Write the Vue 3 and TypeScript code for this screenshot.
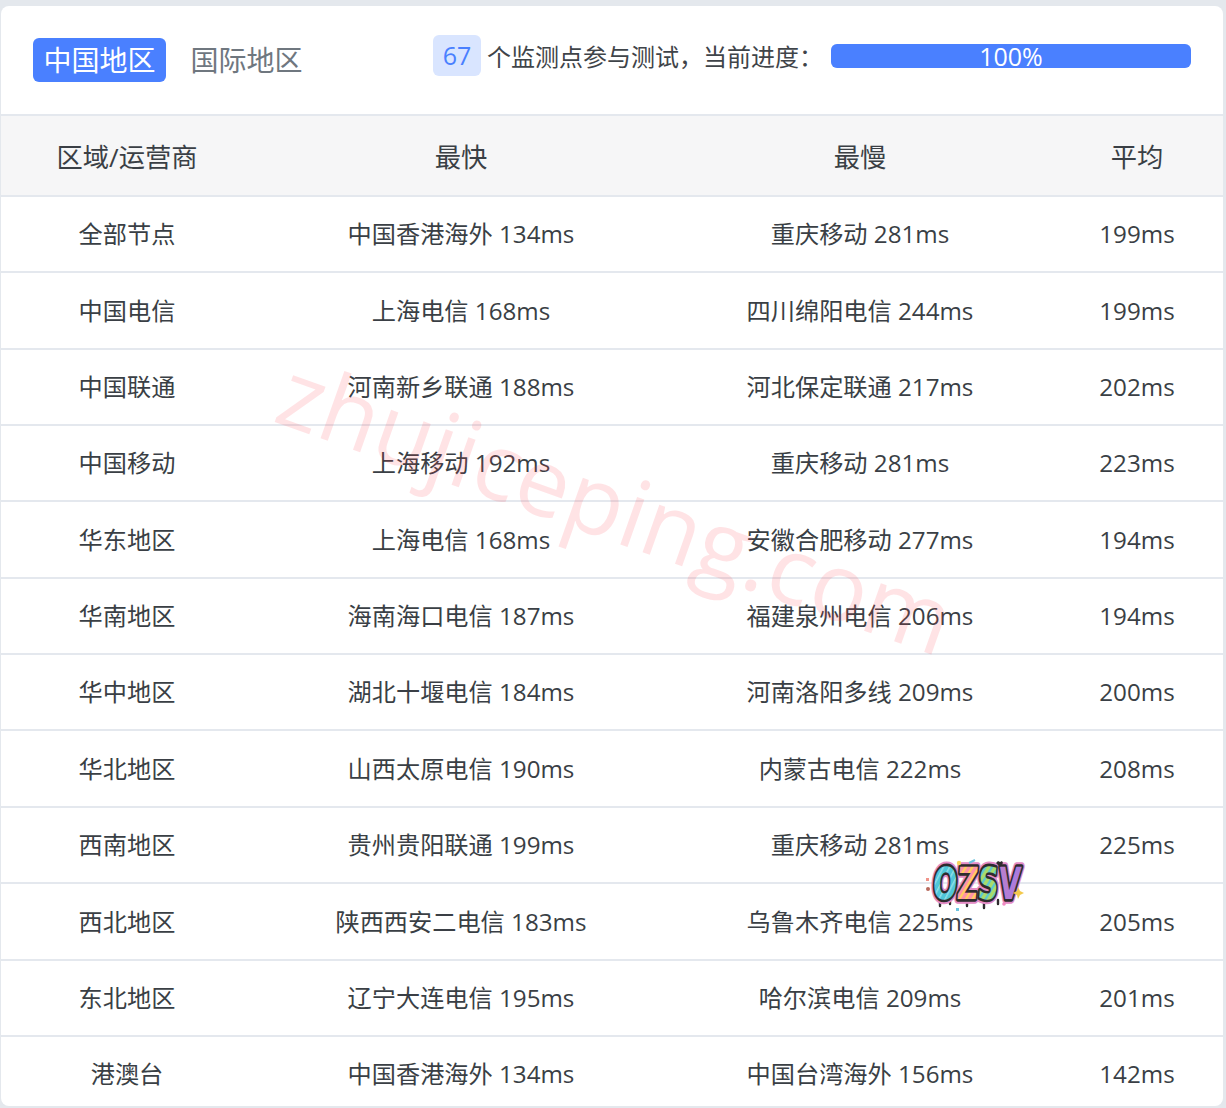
<script setup lang="ts">
interface Row { area: string; fast: string; slow: string; avg: string }
const rows: Row[] = [
  { area: '全部节点', fast: '中国香港海外 134ms', slow: '重庆移动 281ms', avg: '199ms' },
  { area: '中国电信', fast: '上海电信 168ms', slow: '四川绵阳电信 244ms', avg: '199ms' },
  { area: '中国联通', fast: '河南新乡联通 188ms', slow: '河北保定联通 217ms', avg: '202ms' },
  { area: '中国移动', fast: '上海移动 192ms', slow: '重庆移动 281ms', avg: '223ms' },
  { area: '华东地区', fast: '上海电信 168ms', slow: '安徽合肥移动 277ms', avg: '194ms' },
  { area: '华南地区', fast: '海南海口电信 187ms', slow: '福建泉州电信 206ms', avg: '194ms' },
  { area: '华中地区', fast: '湖北十堰电信 184ms', slow: '河南洛阳多线 209ms', avg: '200ms' },
  { area: '华北地区', fast: '山西太原电信 190ms', slow: '内蒙古电信 222ms', avg: '208ms' },
  { area: '西南地区', fast: '贵州贵阳联通 199ms', slow: '重庆移动 281ms', avg: '225ms' },
  { area: '西北地区', fast: '陕西西安二电信 183ms', slow: '乌鲁木齐电信 225ms', avg: '205ms' },
  { area: '东北地区', fast: '辽宁大连电信 195ms', slow: '哈尔滨电信 209ms', avg: '201ms' },
  { area: '港澳台', fast: '中国香港海外 134ms', slow: '中国台湾海外 156ms', avg: '142ms' },
]
</script>

<template>
  <div class="page">
    <div class="card">
      <div class="top">
        <div class="tabs">
          <span class="tab active">中国地区</span>
          <span class="tab">国际地区</span>
        </div>
        <div class="status">
          <span class="count">67</span>
          <span class="label">个监测点参与测试，当前进度：</span>
          <div class="bar"><div class="fill" :style="{ width: '100%' }">100%</div></div>
        </div>
      </div>
      <div class="row head">
        <div>区域/运营商</div>
        <div>最快</div>
        <div>最慢</div>
        <div>平均</div>
      </div>
      <div v-for="(r, i) in rows" :key="i" class="row">
        <div>{{ r.area }}</div>
        <div>{{ r.fast }}</div>
        <div>{{ r.slow }}</div>
        <div>{{ r.avg }}</div>
      </div>
    </div>
    <div class="watermark">zhujiceping.com</div>
    <svg class="logo" width="100" height="56" viewBox="0 0 100 56" aria-label="OZSV">
      <defs>
        <pattern id="pO" width="5" height="5" patternUnits="userSpaceOnUse" patternTransform="rotate(35)">
          <rect width="5" height="5" fill="#4fc6d9" />
          <rect width="1.4" height="5" fill="#8fdde6" />
        </pattern>
        <pattern id="pZ" width="5" height="5" patternUnits="userSpaceOnUse" patternTransform="rotate(40)">
          <rect width="5" height="5" fill="#ff93a6" />
          <rect width="2" height="5" fill="#ffcf5f" />
        </pattern>
        <pattern id="pS" width="5" height="5" patternUnits="userSpaceOnUse" patternTransform="rotate(40)">
          <rect width="5" height="5" fill="#a8dc6c" />
          <rect width="2" height="5" fill="#5cc8cf" />
        </pattern>
        <linearGradient id="gV" x1="0" y1="0" x2="1" y2="0">
          <stop offset="0" stop-color="#ff8f86" />
          <stop offset="1" stop-color="#a67ae2" />
        </linearGradient>
      </defs>
      <g stroke="#2f2b2e" stroke-width="2.4" stroke-linecap="round">
        <path d="M14 42v6M24 43v3M41 44v4M58 44v6M72 42v4" />
      </g>
      <g transform="translate(6 41) skewX(-4) scale(1 1.55)">
        <text class="lt outer" x="0" y="0">OZSV</text>
        <text class="lt inner" x="0" y="0">OZSV</text>
        <text class="lt" x="0" y="0"><tspan fill="url(#pO)">O</tspan><tspan fill="url(#pZ)">Z</tspan><tspan fill="url(#pS)">S</tspan><tspan fill="url(#gV)">V</tspan></text>
      </g>
      <circle cx="33" cy="5" r="2.2" fill="#f6d55c" />
      <path d="M70 5l2 -2 2 1 2 -1 1 2 -3 4z" fill="#2f2b2e" />
      <path d="M43 5l6-3" stroke="#6cc5e0" stroke-width="2" />
      <path d="M92 29l2 4 4 2-4 2-2 4-1-4-4-2 4-2z" fill="#f3c94c" />
      <circle cx="78" cy="46" r="1.8" fill="#f08ac2" />
      <rect x="30" y="50" width="3" height="3" fill="#6cc5e0" />
      <circle cx="2" cy="31" r="2" fill="#b86a5e" />
      <rect x="0" y="20" width="3" height="3" fill="#f0948a" />
    </svg>
  </div>
</template>

<style>
html, body { background: #e4e8ed; }
</style>

<style scoped>
.page {
  position: relative;
  width: 1226px;
  height: 1108px;
  box-sizing: border-box;
  padding: 6px 3px 2px 1px;
  background: #e4e8ed;
  overflow: hidden;
  font-family: "Open Sans", "Noto Sans CJK SC", sans-serif;
  color: #3a3f45;
}
.card {
  height: 1100px;
  background: #fff;
  border-radius: 8px;
  overflow: hidden;
}
.top {
  height: 108px;
  box-sizing: border-box;
  display: flex;
  align-items: center;
  justify-content: space-between;
  padding: 0 32px;
}
.tabs {
  display: flex;
  gap: 14px;
}
.tab {
  font-size: 28px;
  line-height: 44px;
  padding: 0 10.5px;
  border-radius: 6px;
  color: #6f777f;
}
.tab.active {
  background: #4a80ff;
  color: #fff;
}
.status {
  display: flex;
  align-items: center;
  margin-top: -9px;
}
.count {
  width: 48px;
  height: 41px;
  line-height: 41px;
  text-align: center;
  background: #d9e5ff;
  color: #4a80ff;
  border-radius: 6px;
  font-size: 25px;
}
.label {
  font-size: 24px;
  margin-left: 6px;
  width: 344px;
  color: #3f4449;
}
.bar {
  width: 360px;
  height: 24px;
  margin-top: 1px;
  border-radius: 6px;
  background: #d9e5ff;
}
.fill {
  height: 100%;
  border-radius: 6px;
  background: #4a80ff;
  color: #fff;
  font-size: 25px;
  line-height: 24px;
  text-align: center;
}
.row {
  display: grid;
  grid-template-columns: 252px 416px 382px 172px;
  height: 76.39px;
  box-sizing: border-box;
  padding-top: 0.4px;
  border-bottom: 2px solid #e4e8ee;
  font-size: 24.2px;
  line-height: 34px;
  align-items: center;
  text-align: center;
}
.row.head {
  height: 82.75px;
  padding-top: 4px;
  background: #f6f6f7;
  border-top: 2px solid #e4e8ee;
  font-size: 26.3px;
}
.watermark {
  position: absolute;
  left: 257px;
  top: 455px;
  width: 720px;
  font-size: 94px;
  line-height: 100px;
  white-space: nowrap;
  text-align: center;
  color: rgba(255, 60, 70, 0.14);
  transform: rotate(19.5deg);
  transform-origin: center;
  font-family: "Open Sans", sans-serif;
  pointer-events: none;
}
.logo {
  position: absolute;
  left: 926px;
  top: 858px;
}
.lt {
  font-family: "DejaVu Sans", sans-serif;
  font-weight: 700;
  font-size: 28.5px;
}
.outer {
  fill: none;
  stroke: #e48cc6;
  stroke-width: 6px;
  stroke-linejoin: round;
}
.inner {
  fill: none;
  stroke: #2f2b2e;
  stroke-width: 3.4px;
  stroke-linejoin: round;
}
</style>
